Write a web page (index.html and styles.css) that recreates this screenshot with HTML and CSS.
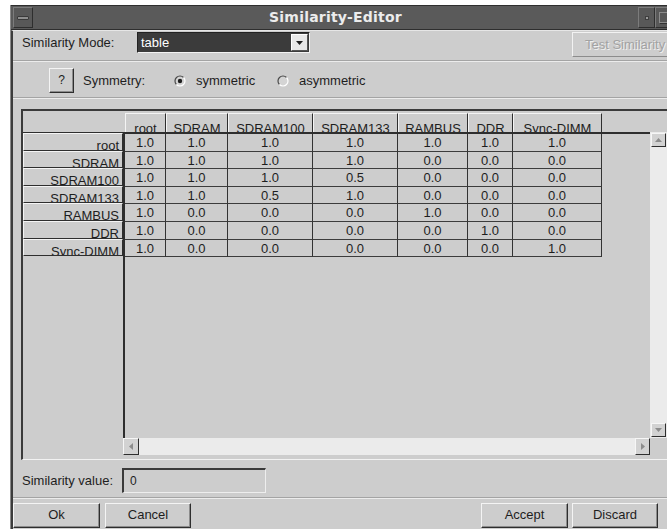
FILE: index.html
```html
<!DOCTYPE html>
<html lang="en">
<head>
<meta charset="utf-8">
<title>Similarity-Editor</title>
<link rel="stylesheet" href="styles.css">
</head>
<body>
<div class="win">
  <div class="titlebar">
    <span class="tb-btn tb-menu"><span class="dash"></span></span>
    <span class="title">Similarity-Editor</span>
    <span class="tb-btn tb-min"><span class="dot"></span></span>
    <span class="tb-btn tb-max"><span class="box"></span></span>
  </div>

  <div class="client">
    <div class="mode-row">
      <span class="mode-lbl">Similarity Mode:</span>
      <div class="combo">
        <span class="combo-text">table</span>
        <span class="combo-drop">
          <svg width="7" height="4" viewBox="0 0 7 4"><path d="M0 0H7L3.5 4Z" fill="#1e1e1e"/></svg>
        </span>
      </div>
      <span class="test-btn">Test Similarity</span>
    </div>
    <div class="groove"></div>

    <div class="sym-row">
      <span class="help-btn">?</span>
      <span class="sym-lbl">Symmetry:</span>
      <span class="radio radio-first">
        <svg width="12" height="12" viewBox="0 0 12 12">
          <circle cx="6" cy="6" r="5" fill="#d4d4d4"/>
          <path d="M2.46 9.54A5 5 0 0 1 9.54 2.46" fill="none" stroke="#4a4a4a" stroke-width="1.2"/>
          <path d="M9.54 2.46A5 5 0 0 1 2.46 9.54" fill="none" stroke="#ffffff" stroke-width="1.2"/>
          <circle cx="6" cy="6" r="2.2" fill="#1e1e1e"/>
        </svg>
        symmetric
      </span>
      <span class="radio">
        <svg width="12" height="12" viewBox="0 0 12 12">
          <circle cx="6" cy="6" r="5" fill="#d4d4d4"/>
          <path d="M2.46 9.54A5 5 0 0 1 9.54 2.46" fill="none" stroke="#4a4a4a" stroke-width="1.2"/>
          <path d="M9.54 2.46A5 5 0 0 1 2.46 9.54" fill="none" stroke="#ffffff" stroke-width="1.2"/>
        </svg>
        asymmetric
      </span>
    </div>
    <div class="groove"></div>

    <div class="tframe">
      <div class="head-row">
        <div class="corner"></div>
        <div class="cols hdr">
          <span class="hcell">root</span>
          <span class="hcell">SDRAM</span>
          <span class="hcell">SDRAM100</span>
          <span class="hcell">SDRAM133</span>
          <span class="hcell">RAMBUS</span>
          <span class="hcell">DDR</span>
          <span class="hcell">Sync-DIMM</span>
        </div>
      </div>
      <div class="body-row">
        <div class="labels">
          <span class="rlabel">root</span>
          <span class="rlabel">SDRAM</span>
          <span class="rlabel">SDRAM100</span>
          <span class="rlabel">SDRAM133</span>
          <span class="rlabel">RAMBUS</span>
          <span class="rlabel">DDR</span>
          <span class="rlabel">Sync-DIMM</span>
        </div>
        <div class="rpane">
          <div class="vp-row">
            <div class="viewport">
              <div class="cols data">
                <span>1.0</span><span>1.0</span><span>1.0</span><span>1.0</span><span>1.0</span><span>1.0</span><span>1.0</span>
                <span>1.0</span><span>1.0</span><span>1.0</span><span>1.0</span><span>0.0</span><span>0.0</span><span>0.0</span>
                <span>1.0</span><span>1.0</span><span>1.0</span><span>0.5</span><span>0.0</span><span>0.0</span><span>0.0</span>
                <span>1.0</span><span>1.0</span><span>0.5</span><span>1.0</span><span>0.0</span><span>0.0</span><span>0.0</span>
                <span>1.0</span><span>0.0</span><span>0.0</span><span>0.0</span><span>1.0</span><span>0.0</span><span>0.0</span>
                <span>1.0</span><span>0.0</span><span>0.0</span><span>0.0</span><span>0.0</span><span>1.0</span><span>0.0</span>
                <span>1.0</span><span>0.0</span><span>0.0</span><span>0.0</span><span>0.0</span><span>0.0</span><span>1.0</span>
              </div>
            </div>
            <div class="vbar">
              <span class="sbtn vbtn">
                <svg width="7" height="4" viewBox="0 0 7 4"><path d="M0 4H7L3.5 0Z" fill="#8c8c8c"/></svg>
              </span>
              <span class="vtrack"></span>
              <span class="sbtn vbtn">
                <svg width="7" height="4" viewBox="0 0 7 4"><path d="M0 0H7L3.5 4Z" fill="#8c8c8c"/></svg>
              </span>
            </div>
          </div>
          <div class="hbar-row">
            <div class="hbar">
              <span class="sbtn hbtn-l">
                <svg width="4" height="7" viewBox="0 0 4 7"><path d="M4 0V7L0 3.5Z" fill="#8c8c8c"/></svg>
              </span>
              <span class="htrack"></span>
              <span class="sbtn hbtn-r">
                <svg width="4" height="7" viewBox="0 0 4 7"><path d="M0 0V7L4 3.5Z" fill="#8c8c8c"/></svg>
              </span>
            </div>
          </div>
        </div>
      </div>
    </div>

    <div class="val-row">
      <span class="val-lbl">Similarity value:</span>
      <span class="val-input">0</span>
    </div>
    <div class="groove"></div>

    <div class="btn-row">
      <span class="btn btn-ok">Ok</span>
      <span class="btn btn-cancel">Cancel</span>
      <span class="btn btn-accept">Accept</span>
      <span class="btn btn-discard">Discard</span>
    </div>
  </div>
</div>
</body>
</html>
```

FILE: styles.css
```css
* {
  box-sizing: border-box;
}

html,
body {
  margin: 0;
  padding: 0;
}

body {
  width: 667px;
  height: 529px;
  overflow: hidden;
  background: #ffffff;
  font-family: "Liberation Sans", Arial, sans-serif;
  font-size: 13px;
  color: #1e1e1e;
}

/* window frame */
.win {
  margin: 5px 0 0 10px;
  width: 657px;
  height: 524px;
  overflow: hidden;
  border-left: 1px solid #8a8a8a;
  display: flex;
  flex-direction: column;
}

/* title bar */
.titlebar {
  flex: 0 0 25px;
  display: flex;
  align-items: center;
  background: #5a5a5a;
  border-top: 1px solid #2e2e2e;
  border-bottom: 1px solid #2e2e2e;
  overflow: hidden;
}

.tb-btn {
  flex: 0 0 auto;
  height: 21px;
  border-style: solid;
  border-width: 1px;
  border-color: #7c7c7c #2e2e2e #2e2e2e #7c7c7c;
  background: #585858;
  display: flex;
  align-items: center;
  justify-content: center;
}

.tb-menu {
  width: 20px;
  margin-left: 2px;
}

.tb-menu .dash {
  width: 12px;
  height: 4px;
  background: #8e8e8e;
  border: 1px solid #3a3a3a;
  border-radius: 1px;
}

.title {
  flex: 0 0 605px;
  text-align: center;
  font-family: "DejaVu Sans", sans-serif;
  font-weight: bold;
  font-size: 14px;
  letter-spacing: 0.2px;
  color: #ececec;
  line-height: 23px;
}

.tb-min,
.tb-max {
  width: 17px;
}

.tb-min .dot {
  width: 4px;
  height: 4px;
  background: #9a9a9a;
  border: 1px solid #3e3e3e;
}

.tb-max {
  justify-content: flex-start;
  padding-left: 3px;
}

.tb-max .box {
  width: 11px;
  height: 11px;
  border: 1px solid #8c8c8c;
  box-shadow: 1px 1px 0 #333333;
}

/* dialog body */
.client {
  flex: 1;
  min-height: 0;
  background: #cdcdcd;
  border-left: 2px solid #3c3c3c;
  border-top: 1px solid #e6e6e6;
  display: flex;
  flex-direction: column;
}

.groove {
  flex: 0 0 2px;
  border-top: 1px solid #a4a4a4;
  border-bottom: 1px solid #ececec;
}

/* mode selector row */
.mode-row {
  flex: 0 0 29px;
  display: flex;
  align-items: flex-start;
  padding-top: 1px;
}

.mode-lbl {
  flex: 0 0 124px;
  padding-left: 9px;
  line-height: 21px;
}

.combo {
  flex: 0 0 173px;
  height: 21px;
  background: #3b3b3b;
  border-style: solid;
  border-width: 1px;
  border-color: #222222 #f2f2f2 #f2f2f2 #222222;
  display: flex;
  align-items: center;
  color: #ffffff;
  padding-left: 3px;
}

.combo-text {
  flex: 1;
}

.combo-drop {
  width: 17px;
  height: 17px;
  margin-right: 1px;
  background: #e8e8e8;
  border-style: solid;
  border-width: 1px;
  border-color: #ffffff #555555 #555555 #ffffff;
  display: flex;
  align-items: center;
  justify-content: center;
}

.test-btn {
  flex: 0 0 110px;
  margin-left: 262px;
  height: 25px;
  border-style: solid;
  border-width: 1px;
  border-color: #f2f2f2 #8c8c8c #8c8c8c #f2f2f2;
  padding-left: 12px;
  line-height: 23px;
  color: #a2a2a2;
  text-shadow: 1px 1px 0 #f0f0f0;
  white-space: nowrap;
}

/* symmetry row */
.sym-row {
  flex: 0 0 35px;
  display: flex;
  align-items: flex-start;
  padding-top: 6px;
}

.help-btn {
  flex: 0 0 25px;
  height: 25px;
  margin-left: 36px;
  border-style: solid;
  border-width: 1px;
  border-color: #f4f4f4 #2e2e2e #2e2e2e #f4f4f4;
  box-shadow: inset -1px -1px 0 #8c8c8c;
  text-align: center;
  line-height: 22px;
  font-size: 12px;
}

.sym-lbl {
  flex: 0 0 91px;
  margin-left: 9px;
  line-height: 25px;
}

.radio {
  display: flex;
  align-items: center;
  gap: 10px;
  height: 25px;
}

.radio-first {
  flex: 0 0 103px;
}

/* similarity table */
.tframe {
  flex: 0 0 351px;
  width: 660px;
  margin: 10px 0 0 8px;
  border-style: solid;
  border-width: 2px 0 1px 2px;
  border-color: #3a3a3a #ffffff #f2f2f2 #3a3a3a;
  display: flex;
  flex-direction: column;
}

.head-row {
  flex: 0 0 21px;
  display: flex;
}

.corner {
  flex: 0 0 102px;
}

.cols {
  display: grid;
  grid-template-columns: 41px 62px 85px 85px 70px 45px 89px;
}

.hdr {
  margin-top: 2px;
  height: 19px;
}

.hcell {
  height: 19px;
  overflow: hidden;
  border-style: solid;
  border-width: 1px 1px 0 1px;
  border-color: #f4f4f4 #2e2e2e #2e2e2e #f4f4f4;
  text-align: center;
  padding-top: 8px;
  line-height: 13px;
  white-space: nowrap;
}

.body-row {
  flex: 1;
  min-height: 0;
  display: flex;
}

.labels {
  flex: 0 0 100px;
  border-top: 1px solid #2e2e2e;
  display: flex;
  flex-direction: column;
}

.rlabel {
  flex: 0 0 17.6px;
  overflow: hidden;
  border-style: solid;
  border-width: 1px;
  border-color: #f4f4f4 #2e2e2e #2e2e2e #f4f4f4;
  text-align: right;
  padding: 5px 3px 0 0;
  line-height: 13px;
  white-space: nowrap;
}

.rpane {
  flex: 0 0 545px;
  display: flex;
  flex-direction: column;
}

.vp-row {
  flex: 0 0 306px;
  display: flex;
}

.viewport {
  flex: 0 0 527px;
  border-top: 2px solid #2e2e2e;
  border-left: 2px solid #2e2e2e;
  overflow: hidden;
}

.data span {
  height: 17.6px;
  border-right: 1px solid #333333;
  border-bottom: 1px solid #3c3c3c;
  text-align: center;
  line-height: 17px;
}

.vbar {
  flex: 0 0 18px;
  background: #ebebeb;
  display: flex;
  flex-direction: column;
  padding: 1px 0 1px 1px;
}

.sbtn {
  display: flex;
  align-items: center;
  justify-content: center;
  background: #d2d2d2;
  border-style: solid;
  border-width: 1px;
  border-color: #f6f6f6 #2e2e2e #2e2e2e #f6f6f6;
}

.vbtn {
  width: 15px;
  height: 14px;
}

.vtrack {
  flex: 1;
}

.hbar-row {
  flex: 0 0 17px;
  display: flex;
}

.hbar {
  flex: 0 0 527px;
  display: flex;
  background: #ebebeb;
}

.hbtn-l {
  flex: 0 0 16px;
}

.htrack {
  flex: 1;
}

.hbtn-r {
  flex: 0 0 15px;
}

/* similarity value row */
.val-row {
  flex: 0 0 37px;
  display: flex;
  align-items: flex-start;
  padding-top: 8px;
}

.val-lbl {
  flex: 0 0 109px;
  padding-left: 9px;
  line-height: 25px;
  white-space: nowrap;
}

.val-input {
  flex: 0 0 144px;
  height: 25px;
  border-style: solid;
  border-width: 2px 1px 1px 2px;
  border-color: #3a3a3a #eeeeee #eeeeee #3a3a3a;
  padding: 3px 0 0 6px;
  line-height: 17px;
  font-size: 12px;
}

/* dialog buttons */
.btn-row {
  flex: 1;
  display: flex;
  align-items: flex-start;
  padding-top: 4px;
}

.btn {
  flex: 0 0 87px;
  height: 25px;
  border-style: solid;
  border-width: 1px;
  border-color: #f4f4f4 #2e2e2e #2e2e2e #f4f4f4;
  box-shadow: inset -1px -1px 0 #8c8c8c;
  text-align: center;
  line-height: 22px;
}

.btn-cancel {
  flex-basis: 86px;
  margin-left: 5px;
}

.btn-accept {
  margin-left: auto;
}

.btn-discard {
  flex-basis: 86px;
  margin-left: 4px;
  margin-right: 9px;
}
```
